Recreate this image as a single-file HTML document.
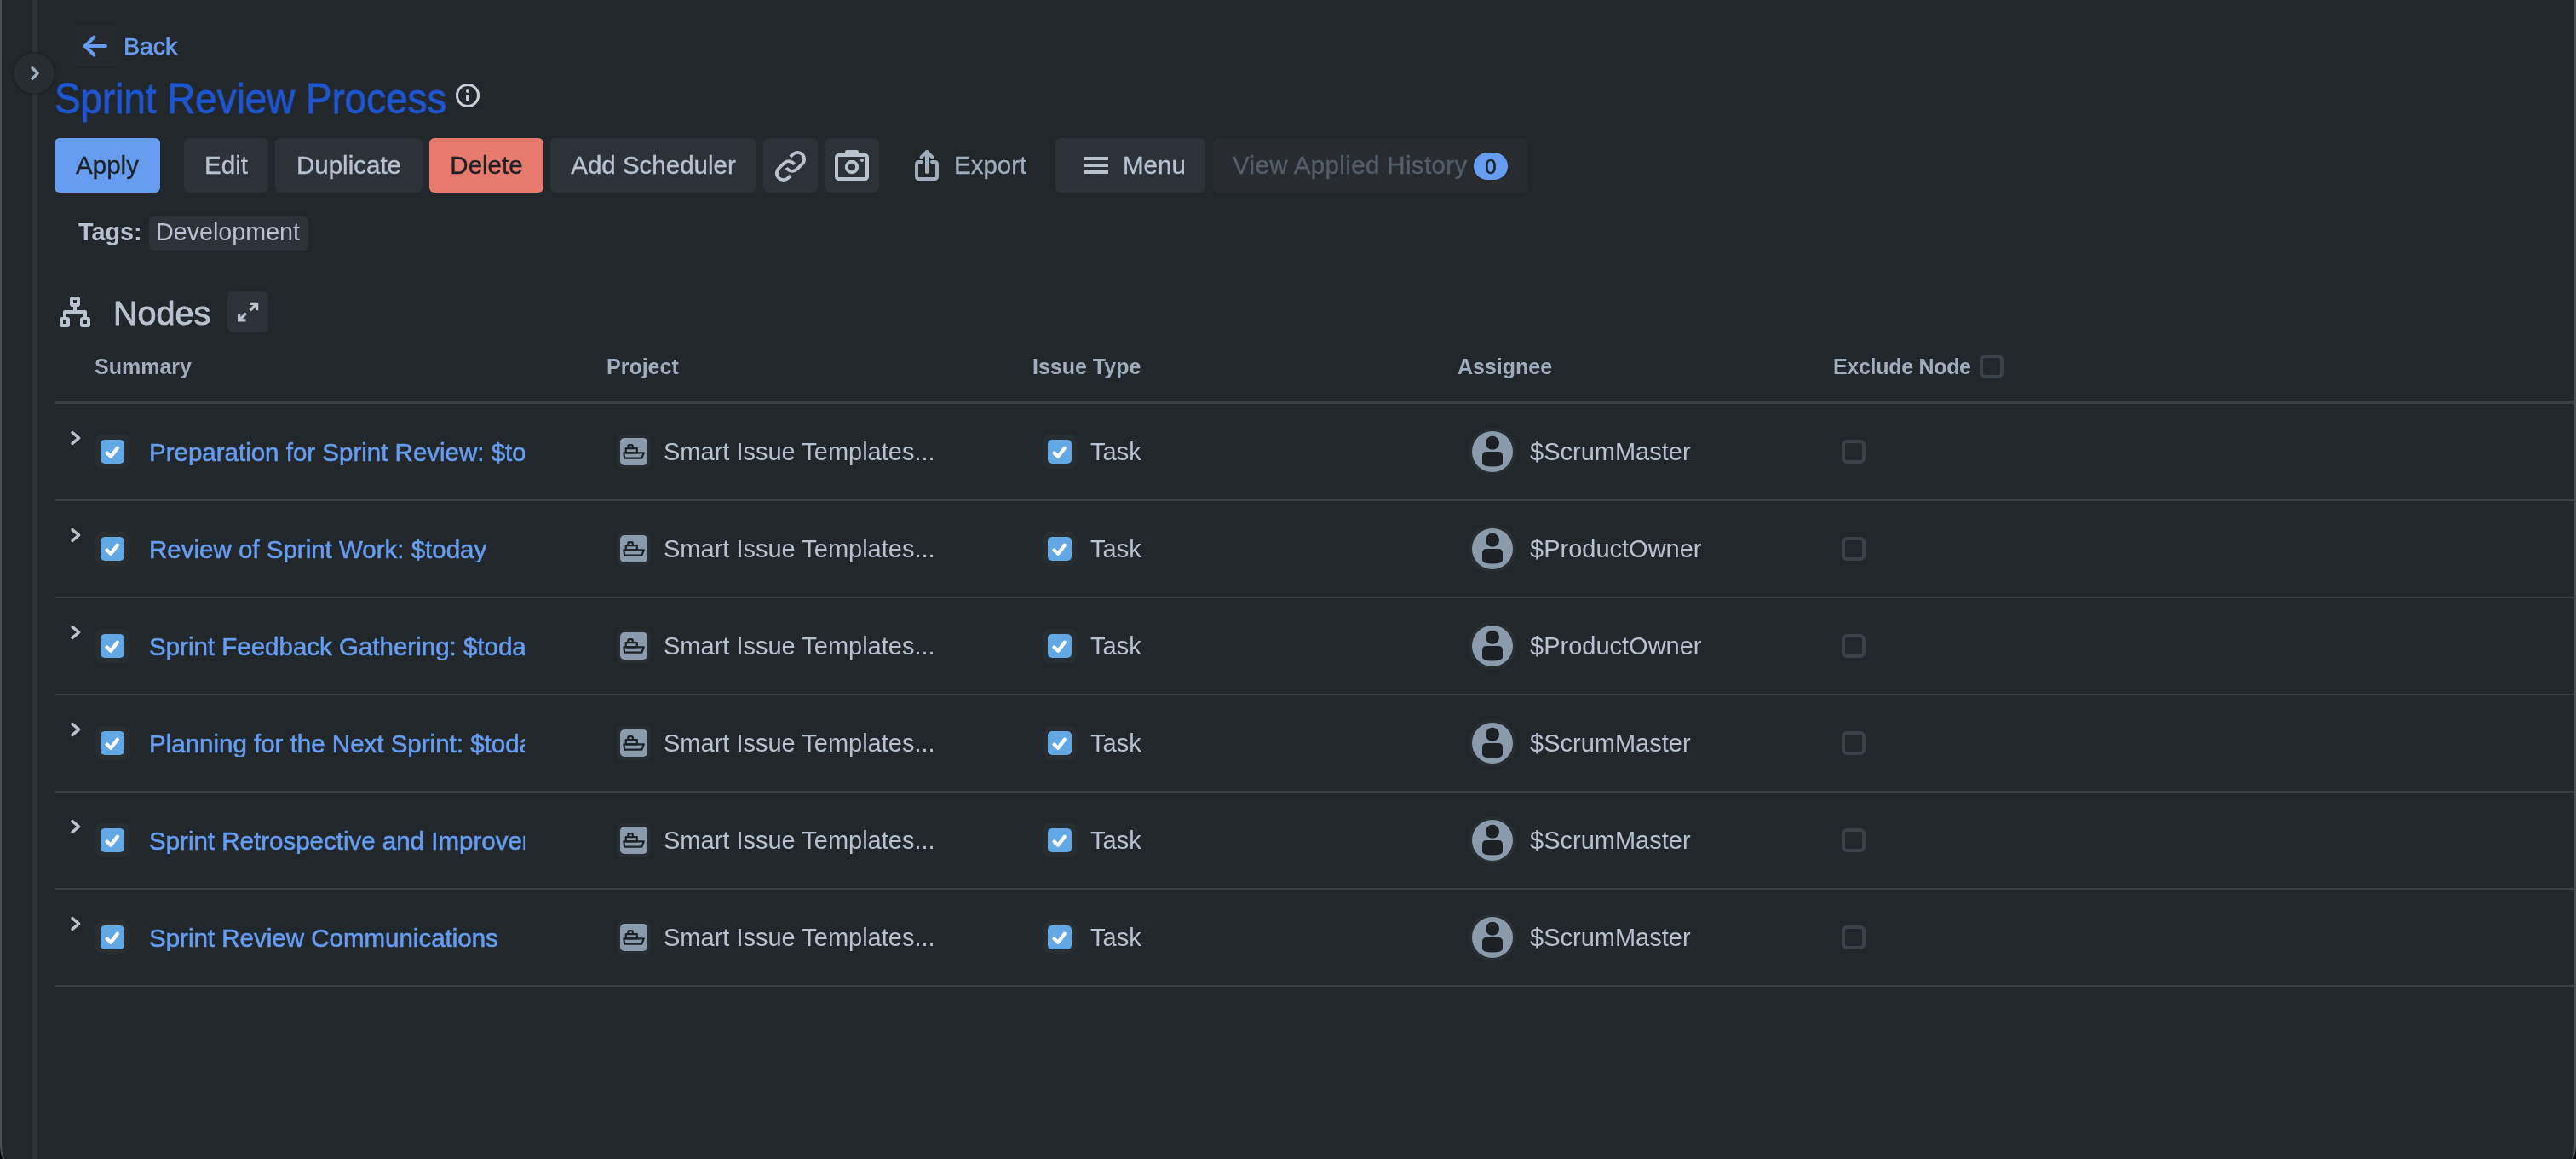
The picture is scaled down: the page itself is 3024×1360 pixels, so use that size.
<!DOCTYPE html>
<html><head><meta charset="utf-8"><title>Sprint Review Process</title>
<style>
html,body{margin:0;padding:0;width:3024px;height:1360px;overflow:hidden;background:#05030f;}
#win{position:absolute;left:0;top:0;width:3020px;height:1383px;background:#22272B;border-left:2px solid #4B4F53;border-right:2px solid #4B4F53;border-bottom:2px solid #4B4F53;border-radius:0 0 40px 40px;overflow:hidden;}
#app{position:absolute;left:-2px;top:0;width:3024px;height:1360px;}
.t{position:absolute;line-height:1;white-space:nowrap;font-family:"Liberation Sans",sans-serif;will-change:transform;}
.b{position:absolute;}
.s{position:absolute;overflow:visible;}
</style></head>
<body><div id="win"><div id="app">
<div class="b" style="left:38px;top:0px;width:6px;height:1360px;background:#2D3239;border-radius:0px;"></div>
<div class="b" style="left:16px;top:62px;width:48px;height:48px;background:#282D31;border-radius:24px;box-shadow:0 0 1.5px 1px rgba(0,0,0,0.22);"></div>
<svg class="s" width="3024" height="1360" style="left:0;top:0"><polyline points="38,79.8 44.2,86 38,92.2" fill="none" stroke="#9FADBC" stroke-width="3.6" stroke-linecap="round" stroke-linejoin="round"/></svg>
<div class="b" style="left:88px;top:30px;width:48px;height:48px;background:#262A2E;border-radius:0px;"></div>
<svg class="s" width="3024" height="1360" style="left:0;top:0"><g fill="none" stroke="#669DF1" stroke-width="4" stroke-linecap="round" stroke-linejoin="round"><line x1="100" y1="54" x2="124" y2="54"/><polyline points="110.5,43.5 100,54 110.5,64.5"/></g></svg>
<div class="t" style="left:144.5px;top:39.87px;font-size:28.5px;color:#669DF1;font-weight:400;-webkit-text-stroke:0.7px #669DF1;">Back</div>
<div class="t" style="left:64px;top:90.58px;font-size:50px;color:#1F55CF;font-weight:400;-webkit-text-stroke:0.9px #1F55CF;transform:scaleX(0.915);transform-origin:0 0;">Sprint Review Process</div>
<svg class="s" width="3024" height="1360" style="left:0;top:0"><circle cx="549" cy="112" r="12.5" fill="none" stroke="#C7D1DB" stroke-width="3"/><circle cx="549" cy="107" r="2.1" fill="#C7D1DB"/><line x1="549" y1="113" x2="549" y2="117" stroke="#C7D1DB" stroke-width="4" stroke-linecap="round"/></svg>
<div class="b" style="left:64px;top:162px;width:124px;height:64px;background:#669DF1;border-radius:6px;"></div>
<div class="t" style="left:64px;width:124px;text-align:center;top:179.03px;font-size:29.5px;color:#1D2125;-webkit-text-stroke:0.35px #1D2125;">Apply</div>
<div class="b" style="left:216px;top:162px;width:99px;height:64px;background:#2D3239;border-radius:6px;"></div>
<div class="t" style="left:216px;width:99px;text-align:center;top:179.03px;font-size:29.5px;color:#B6C2CF;-webkit-text-stroke:0.35px #B6C2CF;">Edit</div>
<div class="b" style="left:323px;top:162px;width:173px;height:64px;background:#2D3239;border-radius:6px;"></div>
<div class="t" style="left:323px;width:173px;text-align:center;top:179.03px;font-size:29.5px;color:#B6C2CF;-webkit-text-stroke:0.35px #B6C2CF;">Duplicate</div>
<div class="b" style="left:504px;top:162px;width:134px;height:64px;background:#E87A6D;border-radius:6px;"></div>
<div class="t" style="left:504px;width:134px;text-align:center;top:179.03px;font-size:29.5px;color:#1D2125;-webkit-text-stroke:0.35px #1D2125;">Delete</div>
<div class="b" style="left:646px;top:162px;width:242px;height:64px;background:#2D3239;border-radius:6px;"></div>
<div class="t" style="left:646px;width:242px;text-align:center;top:179.03px;font-size:29.5px;color:#B6C2CF;-webkit-text-stroke:0.35px #B6C2CF;">Add Scheduler</div>
<div class="b" style="left:896px;top:162px;width:64px;height:64px;background:#2D3239;border-radius:6px;"></div>
<div class="b" style="left:968px;top:162px;width:64px;height:64px;background:#2D3239;border-radius:6px;"></div>
<div class="b" style="left:1239px;top:162px;width:176px;height:64px;background:#2D3239;border-radius:6px;"></div>
<svg class="s" width="3024" height="1360" style="left:0;top:0"><g transform="translate(928,195) rotate(-45)" fill="none" stroke="#B8C3CE" stroke-width="3.8"><path d="M7.7,-7.9 L11.7,-7.9 A7.9,7.9 0 0 1 11.7,7.9 L3,7.9 A7.9,7.9 0 0 1 -4.63,-2.04"/><path d="M-7.7,7.9 L-11.7,7.9 A7.9,7.9 0 0 1 -11.7,-7.9 L-3,-7.9 A7.9,7.9 0 0 1 4.63,2.04"/></g><rect x="982" y="182" width="36" height="28" rx="2.5" fill="none" stroke="#B8C3CE" stroke-width="4"/><path d="M992,182 L992,178 Q992,176 994,176 L1006,176 Q1008,176 1008,178 L1008,182 Z" fill="#B8C3CE"/><circle cx="1000" cy="196" r="6.2" fill="none" stroke="#B8C3CE" stroke-width="4"/><circle cx="1012" cy="188" r="2" fill="#B8C3CE"/><g fill="none" stroke="#9FADBC" stroke-width="4" stroke-linecap="round" stroke-linejoin="round"><path d="M1082,190 L1079,190 Q1076,190 1076,193 L1076,207 Q1076,210 1079,210 L1097,210 Q1100,210 1100,207 L1100,193 Q1100,190 1097,190 L1094,190"/><line x1="1088" y1="178" x2="1088" y2="202"/><polyline points="1081.5,184.5 1088,178 1094.5,184.5"/></g><g fill="#B8C3CE"><rect x="1273" y="184" width="28" height="4"/><rect x="1273" y="192" width="28" height="4"/><rect x="1273" y="200" width="28" height="4"/></g></svg>
<div class="t" style="left:1120px;top:179.03px;font-size:29.5px;color:#9FADBC;font-weight:400;-webkit-text-stroke:0.35px #9FADBC;">Export</div>
<div class="t" style="left:1318px;top:179.03px;font-size:29.5px;color:#B6C2CF;font-weight:400;-webkit-text-stroke:0.35px #B6C2CF;">Menu</div>
<div class="b" style="left:1424px;top:162px;width:369px;height:64px;background:#282C31;border-radius:6px;"></div>
<div class="t" style="left:1447px;top:179.03px;font-size:29.5px;color:#545E69;font-weight:400;-webkit-text-stroke:0.35px #545E69;letter-spacing:0.36px;">View Applied History</div>
<div class="b" style="left:1730px;top:179px;width:40px;height:32px;background:#669DF1;border-radius:16px;"></div>
<div class="t" style="left:1730px;width:40px;text-align:center;top:183.68px;font-size:24px;color:#1D2125;-webkit-text-stroke:0.6px #1D2125;">0</div>
<div class="t" style="left:92px;top:257.62px;font-size:28.8px;color:#B6C2CF;font-weight:700;">Tags:</div>
<div class="b" style="left:175px;top:254px;width:187px;height:40px;background:#2D3239;border-radius:6px;"></div>
<div class="t" style="left:183px;top:257.71px;font-size:28.7px;color:#B6C2CF;font-weight:400;">Development</div>
<svg class="s" width="3024" height="1360" style="left:0;top:0"><g fill="none" stroke="#B8C3CE" stroke-width="4" stroke-linejoin="round"><rect x="84" y="350" width="8" height="8" rx="1"/><rect x="72" y="374" width="8" height="8" rx="1"/><rect x="96" y="374" width="8" height="8" rx="1"/><path d="M88,360 L88,366 M76,372 L76,366 L100,366 L100,372"/></g></svg>
<div class="t" style="left:133px;top:347.86px;font-size:39.5px;color:#B8C3CE;font-weight:400;-webkit-text-stroke:0.9px #B8C3CE;">Nodes</div>
<div class="b" style="left:267px;top:342px;width:48px;height:48px;background:#2D3239;border-radius:6px;"></div>
<svg class="s" width="3024" height="1360" style="left:0;top:0"><g fill="none" stroke="#B8C3CE" stroke-width="3.3"><polyline points="293.6,356.4 301.6,356.4 301.6,364.2" stroke-linecap="butt" stroke-linejoin="miter"/><line x1="300.6" y1="357.4" x2="293.6" y2="364.4" stroke-linecap="butt"/><polyline points="280.7,368.2 280.7,375.9 288.4,375.9" stroke-linecap="butt" stroke-linejoin="miter"/><line x1="281.7" y1="374.9" x2="288.9" y2="367.7" stroke-linecap="butt"/></g></svg>
<div class="t" style="left:111px;top:418.24px;font-size:25px;color:#9FADBC;font-weight:700;">Summary</div>
<div class="t" style="left:712px;top:418.24px;font-size:25px;color:#9FADBC;font-weight:700;">Project</div>
<div class="t" style="left:1212px;top:418.24px;font-size:25px;color:#9FADBC;font-weight:700;">Issue Type</div>
<div class="t" style="left:1711px;top:418.24px;font-size:25px;color:#9FADBC;font-weight:700;">Assignee</div>
<div class="t" style="left:2152px;top:418.24px;font-size:25px;color:#9FADBC;font-weight:700;letter-spacing:-0.3px;">Exclude Node</div>
<div class="b" style="left:2324px;top:416px;width:28px;height:28px;background:transparent;border-radius:6px;box-sizing:border-box;border:4px solid #3A4249;"></div>
<div class="b" style="left:64px;top:470px;width:2960px;height:4px;background:#383F47;border-radius:0px;"></div>
<div class="b" style="left:112px;top:510px;width:40px;height:40px;background:#282D31;border-radius:8px;"></div>
<div class="b" style="left:118px;top:516px;width:28px;height:28px;background:#62A8E4;border-radius:5px;"></div>
<div class="t" style="left:175px;width:441px;overflow:hidden;top:515.53px;font-size:29.5px;color:#669DF1;-webkit-text-stroke:0.55px #669DF1;">Preparation for Sprint Review: $today</div>
<div class="b" style="left:724px;top:510px;width:40px;height:40px;background:#282D31;border-radius:8px;"></div>
<div class="b" style="left:728px;top:514px;width:32px;height:32px;background:#8C9BAB;border-radius:5px;"></div>
<div class="t" style="left:779px;top:515.95px;font-size:29px;color:#B6C2CF;font-weight:400;">Smart Issue Templates...</div>
<div class="b" style="left:1224px;top:510px;width:40px;height:40px;background:#282D31;border-radius:8px;"></div>
<div class="b" style="left:1230px;top:516px;width:28px;height:28px;background:#62A8E4;border-radius:5px;"></div>
<div class="t" style="left:1280px;top:515.95px;font-size:29px;color:#B6C2CF;font-weight:400;">Task</div>
<div class="b" style="left:1724px;top:502px;width:56px;height:56px;background:#282D31;border-radius:28px;"></div>
<div class="b" style="left:1728px;top:506px;width:48px;height:48px;background:#8C9BAB;border-radius:24px;"></div>
<div class="t" style="left:1795.5px;top:515.95px;font-size:29px;color:#B6C2CF;font-weight:400;">$ScrumMaster</div>
<div class="b" style="left:2162px;top:516px;width:28px;height:28px;background:transparent;border-radius:6px;box-sizing:border-box;border:4px solid #3A4249;"></div>
<div class="b" style="left:64px;top:586px;width:2960px;height:2px;background:#383F47;border-radius:0px;"></div>
<div class="b" style="left:112px;top:624px;width:40px;height:40px;background:#282D31;border-radius:8px;"></div>
<div class="b" style="left:118px;top:630px;width:28px;height:28px;background:#62A8E4;border-radius:5px;"></div>
<div class="t" style="left:175px;width:441px;overflow:hidden;top:629.53px;font-size:29.5px;color:#669DF1;-webkit-text-stroke:0.55px #669DF1;">Review of Sprint Work: $today</div>
<div class="b" style="left:724px;top:624px;width:40px;height:40px;background:#282D31;border-radius:8px;"></div>
<div class="b" style="left:728px;top:628px;width:32px;height:32px;background:#8C9BAB;border-radius:5px;"></div>
<div class="t" style="left:779px;top:629.95px;font-size:29px;color:#B6C2CF;font-weight:400;">Smart Issue Templates...</div>
<div class="b" style="left:1224px;top:624px;width:40px;height:40px;background:#282D31;border-radius:8px;"></div>
<div class="b" style="left:1230px;top:630px;width:28px;height:28px;background:#62A8E4;border-radius:5px;"></div>
<div class="t" style="left:1280px;top:629.95px;font-size:29px;color:#B6C2CF;font-weight:400;">Task</div>
<div class="b" style="left:1724px;top:616px;width:56px;height:56px;background:#282D31;border-radius:28px;"></div>
<div class="b" style="left:1728px;top:620px;width:48px;height:48px;background:#8C9BAB;border-radius:24px;"></div>
<div class="t" style="left:1795.5px;top:629.95px;font-size:29px;color:#B6C2CF;font-weight:400;">$ProductOwner</div>
<div class="b" style="left:2162px;top:630px;width:28px;height:28px;background:transparent;border-radius:6px;box-sizing:border-box;border:4px solid #3A4249;"></div>
<div class="b" style="left:64px;top:700px;width:2960px;height:2px;background:#383F47;border-radius:0px;"></div>
<div class="b" style="left:112px;top:738px;width:40px;height:40px;background:#282D31;border-radius:8px;"></div>
<div class="b" style="left:118px;top:744px;width:28px;height:28px;background:#62A8E4;border-radius:5px;"></div>
<div class="t" style="left:175px;width:441px;overflow:hidden;top:743.53px;font-size:29.5px;color:#669DF1;-webkit-text-stroke:0.55px #669DF1;">Sprint Feedback Gathering: $today</div>
<div class="b" style="left:724px;top:738px;width:40px;height:40px;background:#282D31;border-radius:8px;"></div>
<div class="b" style="left:728px;top:742px;width:32px;height:32px;background:#8C9BAB;border-radius:5px;"></div>
<div class="t" style="left:779px;top:743.95px;font-size:29px;color:#B6C2CF;font-weight:400;">Smart Issue Templates...</div>
<div class="b" style="left:1224px;top:738px;width:40px;height:40px;background:#282D31;border-radius:8px;"></div>
<div class="b" style="left:1230px;top:744px;width:28px;height:28px;background:#62A8E4;border-radius:5px;"></div>
<div class="t" style="left:1280px;top:743.95px;font-size:29px;color:#B6C2CF;font-weight:400;">Task</div>
<div class="b" style="left:1724px;top:730px;width:56px;height:56px;background:#282D31;border-radius:28px;"></div>
<div class="b" style="left:1728px;top:734px;width:48px;height:48px;background:#8C9BAB;border-radius:24px;"></div>
<div class="t" style="left:1795.5px;top:743.95px;font-size:29px;color:#B6C2CF;font-weight:400;">$ProductOwner</div>
<div class="b" style="left:2162px;top:744px;width:28px;height:28px;background:transparent;border-radius:6px;box-sizing:border-box;border:4px solid #3A4249;"></div>
<div class="b" style="left:64px;top:814px;width:2960px;height:2px;background:#383F47;border-radius:0px;"></div>
<div class="b" style="left:112px;top:852px;width:40px;height:40px;background:#282D31;border-radius:8px;"></div>
<div class="b" style="left:118px;top:858px;width:28px;height:28px;background:#62A8E4;border-radius:5px;"></div>
<div class="t" style="left:175px;width:441px;overflow:hidden;top:857.53px;font-size:29.5px;color:#669DF1;-webkit-text-stroke:0.55px #669DF1;">Planning for the Next Sprint: $today</div>
<div class="b" style="left:724px;top:852px;width:40px;height:40px;background:#282D31;border-radius:8px;"></div>
<div class="b" style="left:728px;top:856px;width:32px;height:32px;background:#8C9BAB;border-radius:5px;"></div>
<div class="t" style="left:779px;top:857.95px;font-size:29px;color:#B6C2CF;font-weight:400;">Smart Issue Templates...</div>
<div class="b" style="left:1224px;top:852px;width:40px;height:40px;background:#282D31;border-radius:8px;"></div>
<div class="b" style="left:1230px;top:858px;width:28px;height:28px;background:#62A8E4;border-radius:5px;"></div>
<div class="t" style="left:1280px;top:857.95px;font-size:29px;color:#B6C2CF;font-weight:400;">Task</div>
<div class="b" style="left:1724px;top:844px;width:56px;height:56px;background:#282D31;border-radius:28px;"></div>
<div class="b" style="left:1728px;top:848px;width:48px;height:48px;background:#8C9BAB;border-radius:24px;"></div>
<div class="t" style="left:1795.5px;top:857.95px;font-size:29px;color:#B6C2CF;font-weight:400;">$ScrumMaster</div>
<div class="b" style="left:2162px;top:858px;width:28px;height:28px;background:transparent;border-radius:6px;box-sizing:border-box;border:4px solid #3A4249;"></div>
<div class="b" style="left:64px;top:928px;width:2960px;height:2px;background:#383F47;border-radius:0px;"></div>
<div class="b" style="left:112px;top:966px;width:40px;height:40px;background:#282D31;border-radius:8px;"></div>
<div class="b" style="left:118px;top:972px;width:28px;height:28px;background:#62A8E4;border-radius:5px;"></div>
<div class="t" style="left:175px;width:441px;overflow:hidden;top:971.53px;font-size:29.5px;color:#669DF1;-webkit-text-stroke:0.55px #669DF1;">Sprint Retrospective and Improvement</div>
<div class="b" style="left:724px;top:966px;width:40px;height:40px;background:#282D31;border-radius:8px;"></div>
<div class="b" style="left:728px;top:970px;width:32px;height:32px;background:#8C9BAB;border-radius:5px;"></div>
<div class="t" style="left:779px;top:971.95px;font-size:29px;color:#B6C2CF;font-weight:400;">Smart Issue Templates...</div>
<div class="b" style="left:1224px;top:966px;width:40px;height:40px;background:#282D31;border-radius:8px;"></div>
<div class="b" style="left:1230px;top:972px;width:28px;height:28px;background:#62A8E4;border-radius:5px;"></div>
<div class="t" style="left:1280px;top:971.95px;font-size:29px;color:#B6C2CF;font-weight:400;">Task</div>
<div class="b" style="left:1724px;top:958px;width:56px;height:56px;background:#282D31;border-radius:28px;"></div>
<div class="b" style="left:1728px;top:962px;width:48px;height:48px;background:#8C9BAB;border-radius:24px;"></div>
<div class="t" style="left:1795.5px;top:971.95px;font-size:29px;color:#B6C2CF;font-weight:400;">$ScrumMaster</div>
<div class="b" style="left:2162px;top:972px;width:28px;height:28px;background:transparent;border-radius:6px;box-sizing:border-box;border:4px solid #3A4249;"></div>
<div class="b" style="left:64px;top:1042px;width:2960px;height:2px;background:#383F47;border-radius:0px;"></div>
<div class="b" style="left:112px;top:1080px;width:40px;height:40px;background:#282D31;border-radius:8px;"></div>
<div class="b" style="left:118px;top:1086px;width:28px;height:28px;background:#62A8E4;border-radius:5px;"></div>
<div class="t" style="left:175px;width:441px;overflow:hidden;top:1085.53px;font-size:29.5px;color:#669DF1;-webkit-text-stroke:0.55px #669DF1;">Sprint Review Communications</div>
<div class="b" style="left:724px;top:1080px;width:40px;height:40px;background:#282D31;border-radius:8px;"></div>
<div class="b" style="left:728px;top:1084px;width:32px;height:32px;background:#8C9BAB;border-radius:5px;"></div>
<div class="t" style="left:779px;top:1085.95px;font-size:29px;color:#B6C2CF;font-weight:400;">Smart Issue Templates...</div>
<div class="b" style="left:1224px;top:1080px;width:40px;height:40px;background:#282D31;border-radius:8px;"></div>
<div class="b" style="left:1230px;top:1086px;width:28px;height:28px;background:#62A8E4;border-radius:5px;"></div>
<div class="t" style="left:1280px;top:1085.95px;font-size:29px;color:#B6C2CF;font-weight:400;">Task</div>
<div class="b" style="left:1724px;top:1072px;width:56px;height:56px;background:#282D31;border-radius:28px;"></div>
<div class="b" style="left:1728px;top:1076px;width:48px;height:48px;background:#8C9BAB;border-radius:24px;"></div>
<div class="t" style="left:1795.5px;top:1085.95px;font-size:29px;color:#B6C2CF;font-weight:400;">$ScrumMaster</div>
<div class="b" style="left:2162px;top:1086px;width:28px;height:28px;background:transparent;border-radius:6px;box-sizing:border-box;border:4px solid #3A4249;"></div>
<div class="b" style="left:64px;top:1156px;width:2960px;height:2px;background:#383F47;border-radius:0px;"></div>
<svg class="s" width="3024" height="1360" style="left:0;top:0"><polyline points="85,507.6 92.6,514 85,520.4" fill="none" stroke="#B8C3CE" stroke-width="3.5" stroke-linecap="round" stroke-linejoin="round"/><polyline points="125.6,531.4 130.1,535.7 137.9,525.6" fill="none" stroke="#FFFFFF" stroke-width="4.2" stroke-linecap="round" stroke-linejoin="round"/><g fill="none" stroke="#1D2125" stroke-width="2.2" stroke-linejoin="round"><path d="M732.3,531.3 L755.8,531.3 L753.4,537.6 L733.2,537.6 Z"/><rect x="734.8" y="526.1" width="13" height="5.2"/><path d="M737.3,526.1 L737.3,523.6 Q737.3,522.1 738.8,522.1 L741.3,522.1 Q742.8,522.1 742.8,523.6 L742.8,526.1"/></g><polyline points="1237.6,531.4 1242.1,535.7 1249.9,525.6" fill="none" stroke="#FFFFFF" stroke-width="4.2" stroke-linecap="round" stroke-linejoin="round"/><circle cx="1752" cy="519.8" r="8" fill="#1D2125"/><path d="M1740,535 Q1740,530 1745,530 L1759,530 Q1764,530 1764,535 L1764,543 Q1764,547.5 1752,547.5 Q1740,547.5 1740,543 Z" fill="#1D2125"/><polyline points="85,621.6 92.6,628 85,634.4" fill="none" stroke="#B8C3CE" stroke-width="3.5" stroke-linecap="round" stroke-linejoin="round"/><polyline points="125.6,645.4 130.1,649.7 137.9,639.6" fill="none" stroke="#FFFFFF" stroke-width="4.2" stroke-linecap="round" stroke-linejoin="round"/><g fill="none" stroke="#1D2125" stroke-width="2.2" stroke-linejoin="round"><path d="M732.3,645.3 L755.8,645.3 L753.4,651.6 L733.2,651.6 Z"/><rect x="734.8" y="640.1" width="13" height="5.2"/><path d="M737.3,640.1 L737.3,637.6 Q737.3,636.1 738.8,636.1 L741.3,636.1 Q742.8,636.1 742.8,637.6 L742.8,640.1"/></g><polyline points="1237.6,645.4 1242.1,649.7 1249.9,639.6" fill="none" stroke="#FFFFFF" stroke-width="4.2" stroke-linecap="round" stroke-linejoin="round"/><circle cx="1752" cy="633.8" r="8" fill="#1D2125"/><path d="M1740,649 Q1740,644 1745,644 L1759,644 Q1764,644 1764,649 L1764,657 Q1764,661.5 1752,661.5 Q1740,661.5 1740,657 Z" fill="#1D2125"/><polyline points="85,735.6 92.6,742 85,748.4" fill="none" stroke="#B8C3CE" stroke-width="3.5" stroke-linecap="round" stroke-linejoin="round"/><polyline points="125.6,759.4 130.1,763.7 137.9,753.6" fill="none" stroke="#FFFFFF" stroke-width="4.2" stroke-linecap="round" stroke-linejoin="round"/><g fill="none" stroke="#1D2125" stroke-width="2.2" stroke-linejoin="round"><path d="M732.3,759.3 L755.8,759.3 L753.4,765.6 L733.2,765.6 Z"/><rect x="734.8" y="754.1" width="13" height="5.2"/><path d="M737.3,754.1 L737.3,751.6 Q737.3,750.1 738.8,750.1 L741.3,750.1 Q742.8,750.1 742.8,751.6 L742.8,754.1"/></g><polyline points="1237.6,759.4 1242.1,763.7 1249.9,753.6" fill="none" stroke="#FFFFFF" stroke-width="4.2" stroke-linecap="round" stroke-linejoin="round"/><circle cx="1752" cy="747.8" r="8" fill="#1D2125"/><path d="M1740,763 Q1740,758 1745,758 L1759,758 Q1764,758 1764,763 L1764,771 Q1764,775.5 1752,775.5 Q1740,775.5 1740,771 Z" fill="#1D2125"/><polyline points="85,849.6 92.6,856 85,862.4" fill="none" stroke="#B8C3CE" stroke-width="3.5" stroke-linecap="round" stroke-linejoin="round"/><polyline points="125.6,873.4 130.1,877.7 137.9,867.6" fill="none" stroke="#FFFFFF" stroke-width="4.2" stroke-linecap="round" stroke-linejoin="round"/><g fill="none" stroke="#1D2125" stroke-width="2.2" stroke-linejoin="round"><path d="M732.3,873.3 L755.8,873.3 L753.4,879.6 L733.2,879.6 Z"/><rect x="734.8" y="868.1" width="13" height="5.2"/><path d="M737.3,868.1 L737.3,865.6 Q737.3,864.1 738.8,864.1 L741.3,864.1 Q742.8,864.1 742.8,865.6 L742.8,868.1"/></g><polyline points="1237.6,873.4 1242.1,877.7 1249.9,867.6" fill="none" stroke="#FFFFFF" stroke-width="4.2" stroke-linecap="round" stroke-linejoin="round"/><circle cx="1752" cy="861.8" r="8" fill="#1D2125"/><path d="M1740,877 Q1740,872 1745,872 L1759,872 Q1764,872 1764,877 L1764,885 Q1764,889.5 1752,889.5 Q1740,889.5 1740,885 Z" fill="#1D2125"/><polyline points="85,963.6 92.6,970 85,976.4" fill="none" stroke="#B8C3CE" stroke-width="3.5" stroke-linecap="round" stroke-linejoin="round"/><polyline points="125.6,987.4 130.1,991.7 137.9,981.6" fill="none" stroke="#FFFFFF" stroke-width="4.2" stroke-linecap="round" stroke-linejoin="round"/><g fill="none" stroke="#1D2125" stroke-width="2.2" stroke-linejoin="round"><path d="M732.3,987.3 L755.8,987.3 L753.4,993.6 L733.2,993.6 Z"/><rect x="734.8" y="982.1" width="13" height="5.2"/><path d="M737.3,982.1 L737.3,979.6 Q737.3,978.1 738.8,978.1 L741.3,978.1 Q742.8,978.1 742.8,979.6 L742.8,982.1"/></g><polyline points="1237.6,987.4 1242.1,991.7 1249.9,981.6" fill="none" stroke="#FFFFFF" stroke-width="4.2" stroke-linecap="round" stroke-linejoin="round"/><circle cx="1752" cy="975.8" r="8" fill="#1D2125"/><path d="M1740,991 Q1740,986 1745,986 L1759,986 Q1764,986 1764,991 L1764,999 Q1764,1003.5 1752,1003.5 Q1740,1003.5 1740,999 Z" fill="#1D2125"/><polyline points="85,1077.6 92.6,1084 85,1090.4" fill="none" stroke="#B8C3CE" stroke-width="3.5" stroke-linecap="round" stroke-linejoin="round"/><polyline points="125.6,1101.4 130.1,1105.7 137.9,1095.6" fill="none" stroke="#FFFFFF" stroke-width="4.2" stroke-linecap="round" stroke-linejoin="round"/><g fill="none" stroke="#1D2125" stroke-width="2.2" stroke-linejoin="round"><path d="M732.3,1101.3 L755.8,1101.3 L753.4,1107.6 L733.2,1107.6 Z"/><rect x="734.8" y="1096.1" width="13" height="5.2"/><path d="M737.3,1096.1 L737.3,1093.6 Q737.3,1092.1 738.8,1092.1 L741.3,1092.1 Q742.8,1092.1 742.8,1093.6 L742.8,1096.1"/></g><polyline points="1237.6,1101.4 1242.1,1105.7 1249.9,1095.6" fill="none" stroke="#FFFFFF" stroke-width="4.2" stroke-linecap="round" stroke-linejoin="round"/><circle cx="1752" cy="1089.8" r="8" fill="#1D2125"/><path d="M1740,1105 Q1740,1100 1745,1100 L1759,1100 Q1764,1100 1764,1105 L1764,1113 Q1764,1117.5 1752,1117.5 Q1740,1117.5 1740,1113 Z" fill="#1D2125"/></svg>
</div></div></body></html>
